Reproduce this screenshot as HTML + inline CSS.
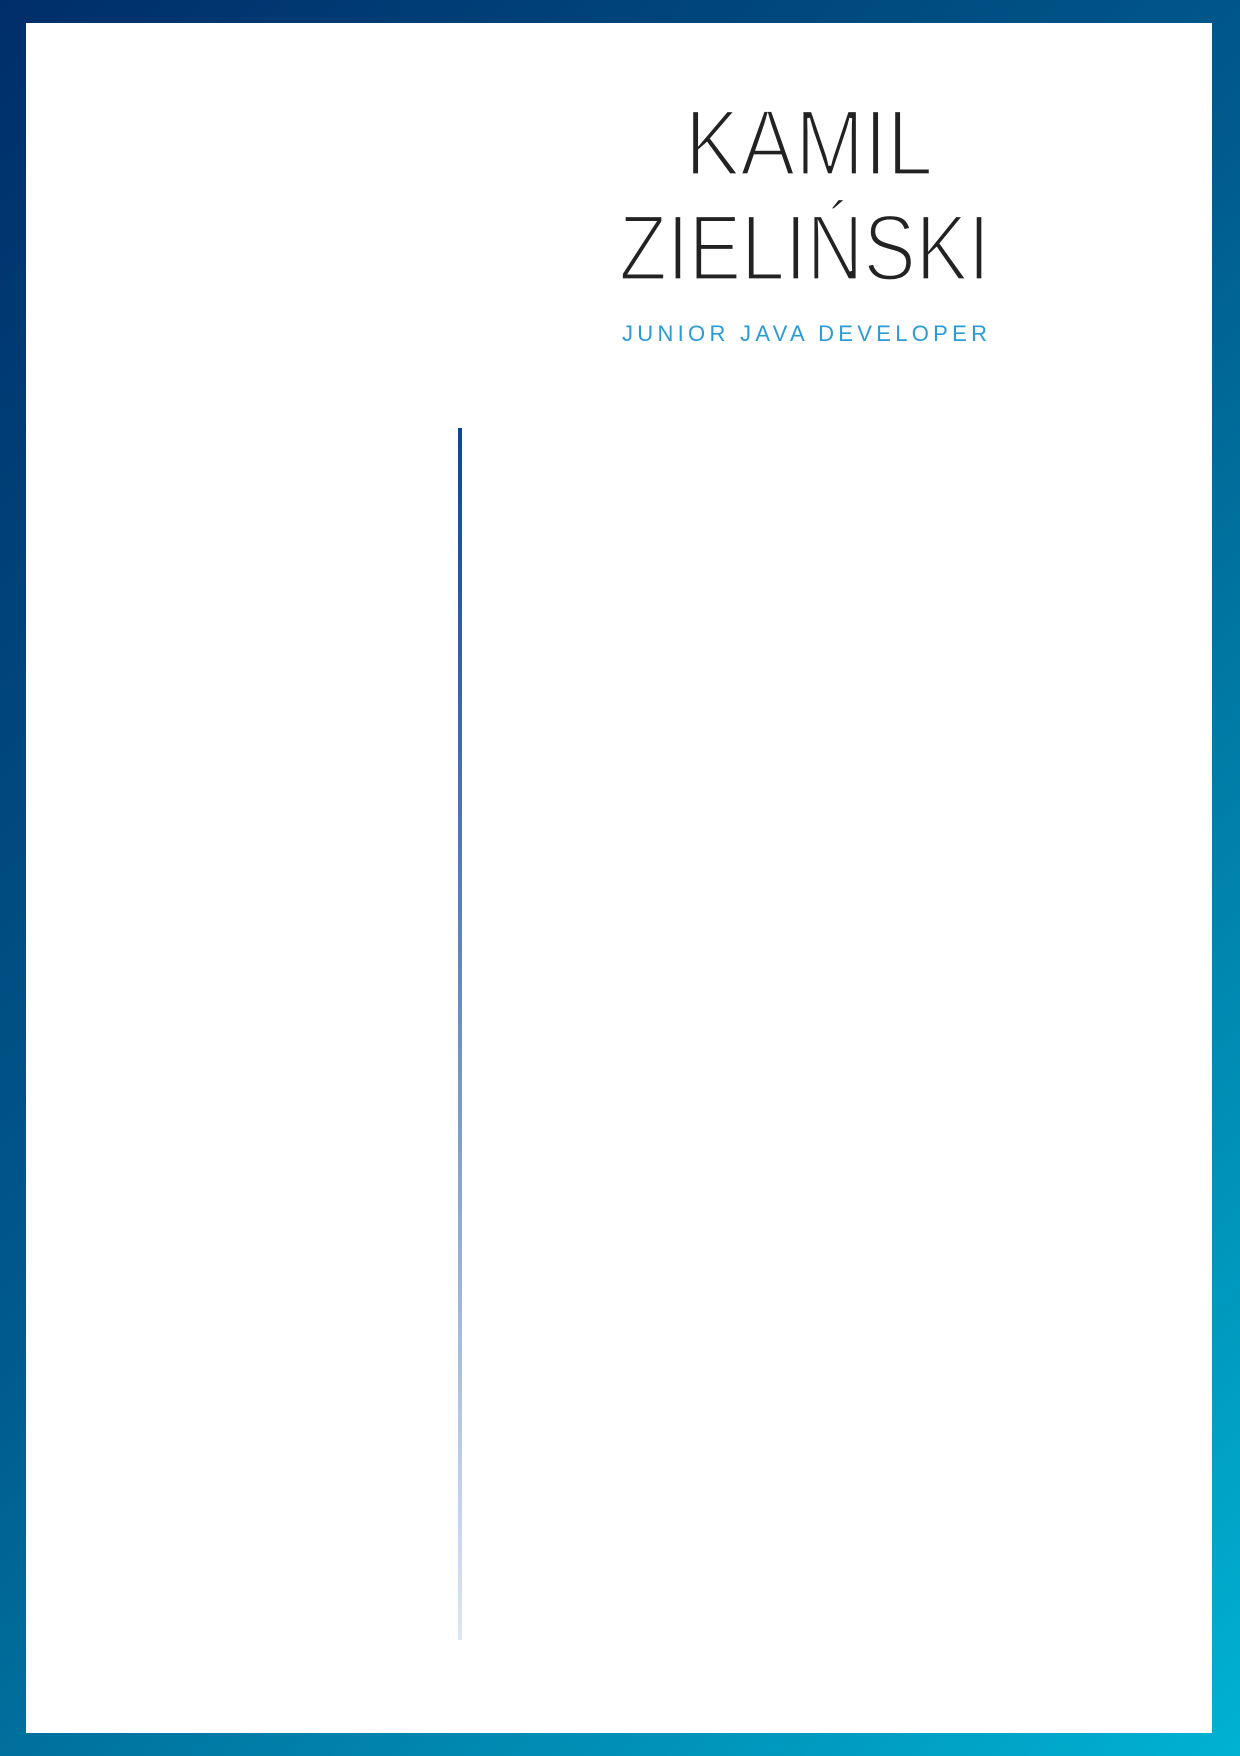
<!DOCTYPE html>
<html><head><meta charset="utf-8"><style>
html,body{margin:0;padding:0}
body{width:1240px;height:1756px;position:relative;overflow:hidden;background:linear-gradient(135deg,#002e6a 0%,#005a8c 45%,#00b2d2 100%)}
.inner{position:absolute;left:26px;top:23px;width:1186px;height:1710px;background:#fff}
.line{position:absolute;left:458px;top:428px;width:4px;height:1212px;background:linear-gradient(#0f4594,#6f90c2 50%,#dce6f3)}
svg{position:absolute;left:0;top:0}
</style></head><body>
<div class="inner"></div>
<div class="line"></div>
<svg width="1240" height="400" viewBox="0 0 1240 400">
<g font-family="Liberation Sans, sans-serif" fill="#222" stroke="#fff" stroke-width="3.2">
<text x="685" y="175" font-size="94" textLength="248" lengthAdjust="spacingAndGlyphs">KAMIL</text>
<text x="619" y="280" font-size="94" textLength="371" lengthAdjust="spacingAndGlyphs">ZIELIŃSKI</text>
</g>
<text x="622" y="341" font-family="Liberation Sans, sans-serif" font-size="22" fill="#2a9bd6" textLength="365" lengthAdjust="spacing">JUNIOR JAVA DEVELOPER</text>
</svg>
</body></html>
